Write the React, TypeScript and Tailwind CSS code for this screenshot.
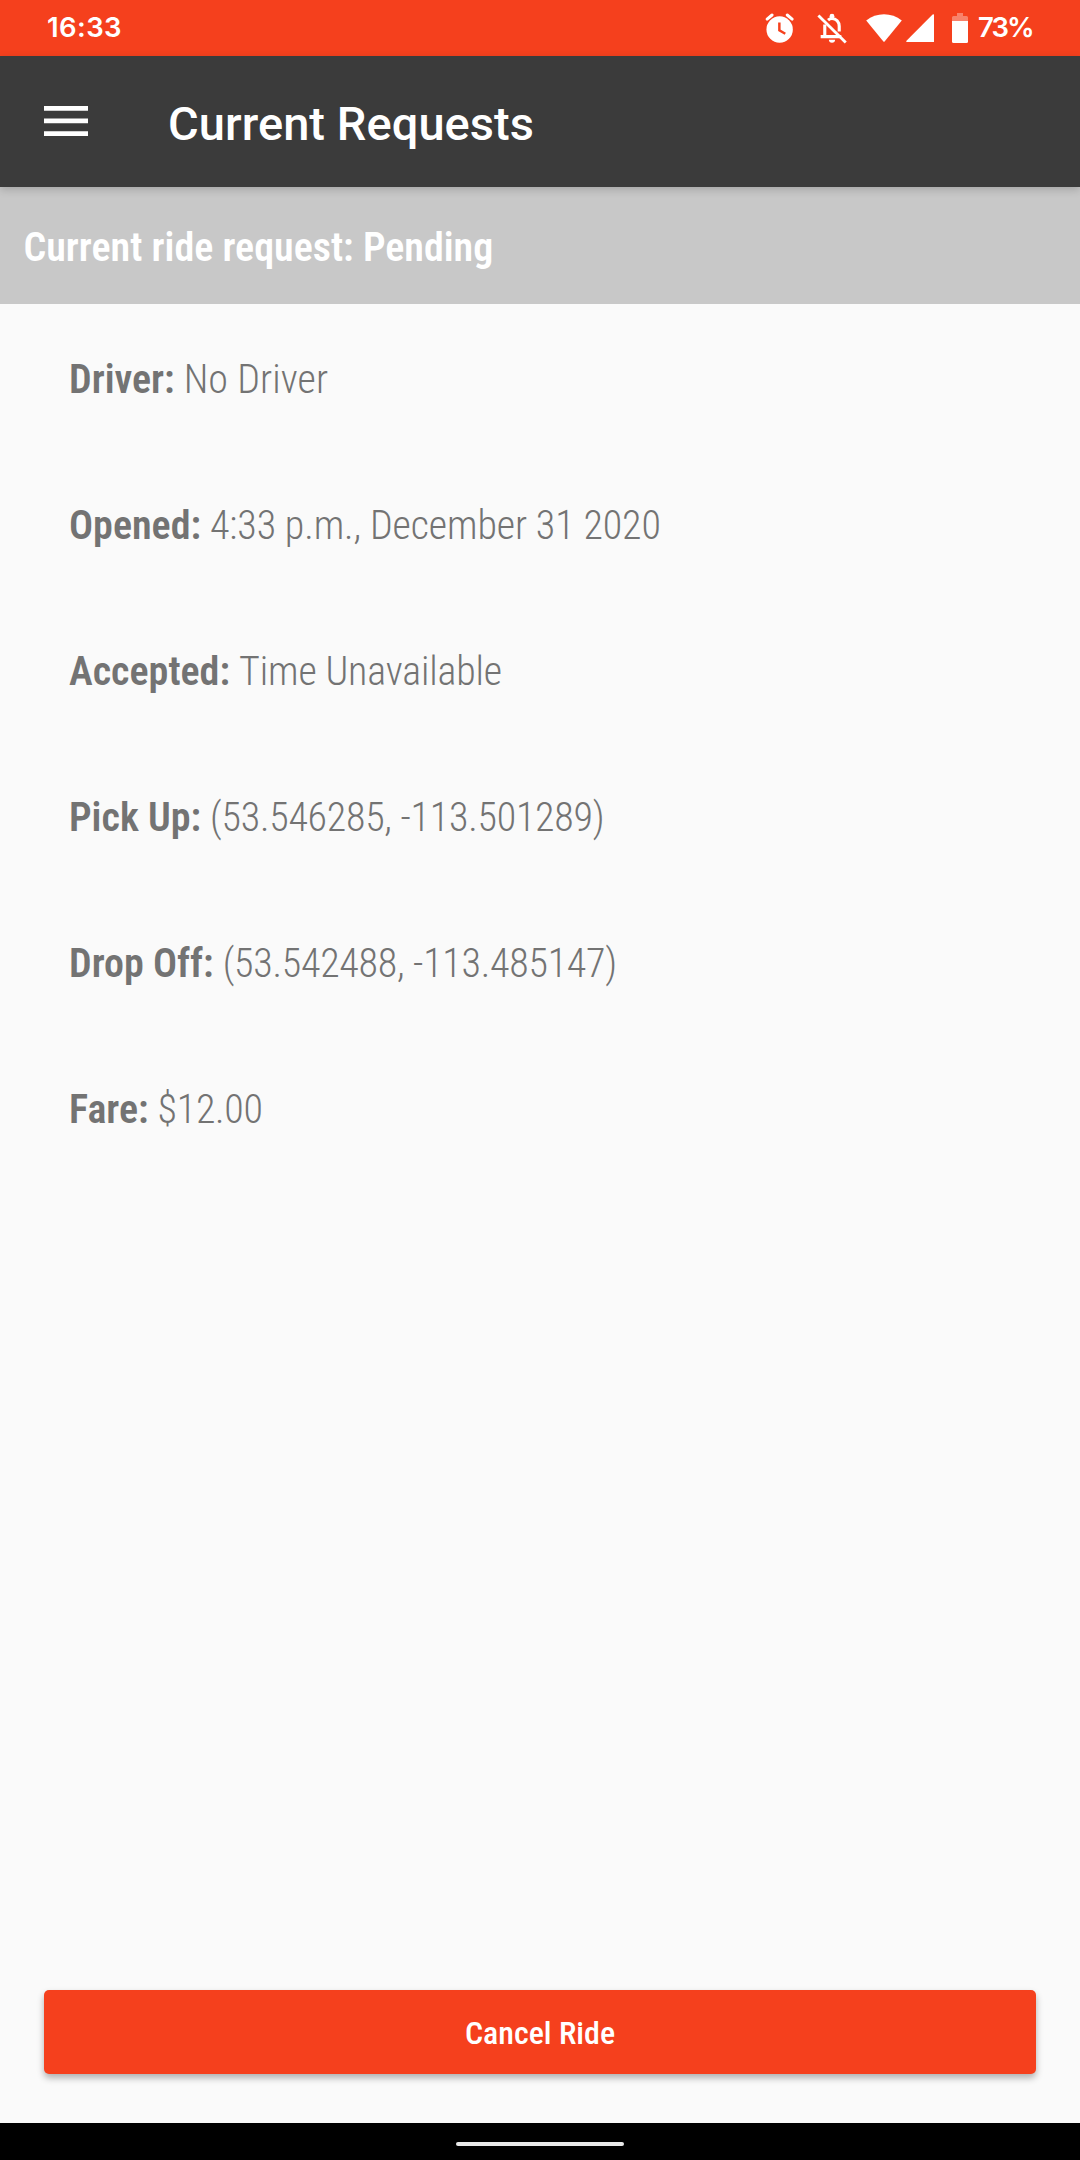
type Detail = { label: string; value: string; tracking: string };

const details: Detail[] = [
  { label: "Driver:", value: "No Driver", tracking: "tracking-[0.08px]" },
  { label: "Opened:", value: "4:33 p.m., December 31 2020", tracking: "tracking-[-0.12px]" },
  { label: "Accepted:", value: "Time Unavailable", tracking: "tracking-[-0.14px]" },
  { label: "Pick Up:", value: "(53.546285, -113.501289)", tracking: "tracking-[-0.26px]" },
  { label: "Drop Off:", value: "(53.542488, -113.485147)", tracking: "tracking-[-0.26px]" },
  { label: "Fare:", value: "$12.00", tracking: "tracking-[-0.3px]" },
];

function AlarmIcon() {
  return (
    <svg viewBox="0 0 24 24" className="size-[33px]" fill="none" stroke="#fff">
      <circle cx="12.1" cy="12.7" r="9.6" fill="#fff" stroke="none" />
      <path d="M3 5.200 6.600 2.200M21.200 5.200 17.600 2.200" strokeWidth="2.2" strokeLinecap="round" />
      <path d="M11.900 7.600v5.700l4.300 2.500" stroke="#f5401d" strokeWidth="1.8" />
    </svg>
  );
}

function BellOffIcon() {
  return (
    <svg viewBox="0 0 24 24" className="-mt-px size-[34px]" fill="none" stroke="#fff">
      <path d="M9.2 6.400c.8-.7 1.7-1.100 2.8-1.100 3 0 5.100 2.400 5.100 5.500v3.600M6.900 9.500V18M4 18.100h14.6" strokeWidth="2.2" />
      <path d="M12 22.400a2.200 2.200 0 0 0 2.200-2.100h-4.400a2.200 2.200 0 0 0 2.200 2.100z" fill="#fff" stroke="none" />
      <circle cx="12" cy="3.700" r="1.700" fill="#fff" stroke="none" />
      <path d="M2.400 3.100 21.700 22.200" strokeWidth="2" />
    </svg>
  );
}

function StatusBar() {
  return (
    <div className="flex h-14 items-center bg-[#f5401d] pl-[47px] font-['Inter'] text-[27.5px] font-semibold leading-none text-white">
      <span className="-mt-px tracking-[0.4px]">16:33</span>
      <div className="ml-auto flex w-[317px] items-center">
        <AlarmIcon />
        <div className="ml-[19px]">
          <BellOffIcon />
        </div>
        <svg viewBox="0 0 36 28" className="ml-[17px] h-7 w-9" fill="#fff">
          <path d="M.2 6.6C5.400 2.300 11.500.2 18 .2s12.600 2.100 17.800 6.400L18.600 27.500q-.6.7-1.200 0z" />
        </svg>
        <svg viewBox="0 0 28 28" className="ml-1 size-7" fill="#fff">
          <path d="M28 .9V28H.8q-1.100-.2-.3-1.200L26.600.500Q28-.3 28 .9z" />
        </svg>
        <svg viewBox="0 0 16 30" className="ml-[18px] h-[30px] w-4" fill="#fff">
          <path opacity=".35" d="M5 0h6v3h3.500Q16 3 16 4.500V8H0V4.500Q0 3 1.500 3H5z" />
          <path d="M0 8h16v20.500q0 1.500-1.500 1.500h-13Q0 30 0 28.500z" />
        </svg>
        <span className="-mt-px ml-2.5 tracking-[-1.9px]">73%</span>
      </div>
    </div>
  );
}

function AppBar() {
  return (
    <header className="relative flex h-[131px] items-center bg-[#3b3b3b] pl-11 shadow-[0_3px_8px_rgba(0,0,0,0.17)]">
      <svg viewBox="0 0 44 30" className="-mt-0.5 h-[30px] w-11" fill="#fff">
        <path d="M0 0h44v4.800H0zM0 12.400h44v4.800H0zM0 25.200h44V30H0z" />
      </svg>
      <h1 className="ml-20 mt-[3px] text-[47px] font-medium leading-none tracking-[0.07px] text-white">Current Requests</h1>
    </header>
  );
}

export default function App() {
  return (
    <div className="flex h-[2160px] w-[1080px] flex-col bg-[#fafafa] font-['Roboto',sans-serif]">
      <StatusBar />
      <AppBar />
      <div className="flex h-[117px] items-center bg-[#c8c8c8] pl-[23.5px] text-[40px] leading-none text-white font-['Roboto_Condensed','Roboto',sans-serif]">
        <span className="mt-[5px] font-semibold">Current ride request: Pending</span>
      </div>
      <main className="flex flex-1 flex-col px-11 pb-[49px] pt-[3px] font-['Roboto_Condensed','Roboto',sans-serif]">
        {details.map(({ label, value, tracking }) => (
          <p key={label} className="flex h-[146px] items-center gap-[9px] pl-[25px] text-[40px] leading-none text-[#737373]">
            <span className="font-semibold">{label}</span>
            <span className={`font-[260] ${tracking}`}>{value}</span>
          </p>
        ))}
        <button className="mt-auto h-[84px] rounded-[5px] bg-[#f5401d] pt-px text-[32px] font-medium leading-none text-white shadow-[0_4px_7px_rgba(0,0,0,0.3)]">
          Cancel Ride
        </button>
      </main>
      <nav className="flex h-[37px] justify-center bg-black pt-[19px]">
        <div className="h-1 w-[168px] rounded-full bg-[#e9e9e9]" />
      </nav>
    </div>
  );
}
